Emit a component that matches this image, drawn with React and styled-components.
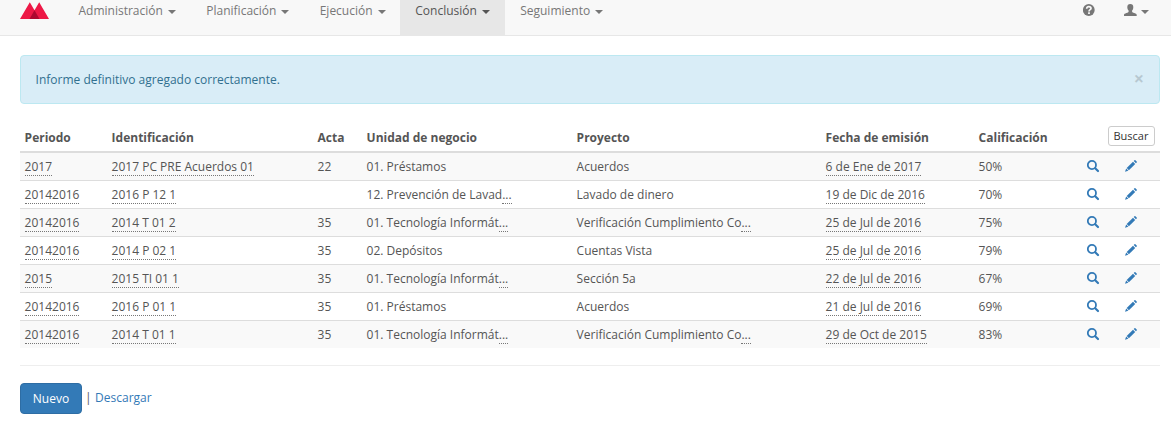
import React from "react";
import styled, { createGlobalStyle } from "styled-components";

const GlobalStyle = createGlobalStyle`
  *, *::before, *::after { box-sizing: border-box; }
  body {
    margin: 0;
    background: #fff;
    color: #555;
    font-family: "Open Sans", "Noto Sans", sans-serif;
    font-size: 12px;
    line-height: 17px;
  }
`;

const Navbar = styled.nav`
  display: flex;
  height: 36px;
  padding-left: 20px;
  background: #f8f8f8;
  border-bottom: 1px solid #e7e7e7;
`;

const Brand = styled.a`
  width: 43.5px;
  padding-top: 2px;
  svg { display: block; }
`;

const NavItem = styled.a`
  display: flex;
  width: ${(p) => p.$width}px;
  padding: 2px 0 0 15px;
  color: ${(p) => (p.$active ? "#555" : "#777")};
  background: ${(p) => (p.$active ? "#e7e7e7" : "transparent")};
`;

const Caret = styled.span`
  width: 8px;
  height: 4px;
  margin: 8px 0 0 5px;
  border-top: 4px solid currentColor;
  border-left: 4px solid transparent;
  border-right: 4px solid transparent;
`;

const NavTools = styled.div`
  display: flex;
  margin-left: auto;
  padding: 4px 22px 0 0;
  color: #777;
  svg { display: block; }
`;

const UserMenu = styled.a`
  display: flex;
  margin-left: 29px;
  ${Caret} { margin-top: 6px; margin-left: 4px; }
`;

const Content = styled.main`
  padding: 19px 11px 0 20px;
`;

const Alert = styled.div`
  display: flex;
  align-items: flex-start;
  justify-content: space-between;
  height: 49px;
  padding: 15px 15px 15px 14.6px;
  color: #31708f;
  background: #d9edf7;
  border: 1px solid #bce8f1;
  border-radius: 4px;
`;

const Close = styled.button`
  padding: 0;
  border: 0;
  background: none;
  color: #000;
  opacity: 0.15;
  font: bold 18px/15px "Open Sans", sans-serif;
`;

const Row = styled.div`
  display: grid;
  grid-template-columns: 87px 206px 49px 210px 249px 153px 108px 38px 1fr;
  height: 28px;
  padding: 5px 0 0 4.6px;
  border-bottom: 1px solid #ddd;
  &:nth-child(even) { background: #f9f9f9; }
  &:last-child { height: 27px; border-bottom: 0; }
`;

const HeaderRow = styled(Row)`
  height: 32px;
  padding-top: 8px;
  border-bottom: 2px solid #ddd;
  font-weight: 700;
`;

const Table = styled.section`
  margin-top: 17px;
`;

const Cell = styled.div`
  white-space: nowrap;
`;

const Dotted = styled.span`
  display: inline-block;
  height: 18px;
  border-bottom: 1px dotted #777;
`;

const SearchButton = styled.button`
  grid-column: 8 / 10;
  justify-self: end;
  width: 47px;
  height: 20px;
  margin: -3px 5px 0 0;
  padding: 0 1px 1px 0;
  color: #333;
  background: #fff;
  border: 1px solid #ccc;
  border-radius: 3px;
  font: 11px/17px "Open Sans", sans-serif;
`;

const IconLink = styled.a`
  padding-top: 2px;
  color: #337ab7;
  svg { display: block; }
`;

const Actions = styled.footer`
  display: flex;
  margin-top: 17px;
  padding-top: 17px;
  border-top: 1px solid #eee;
`;

const PrimaryButton = styled.button`
  width: 62px;
  height: 31px;
  padding: 0;
  color: #fff;
  background: #337ab7;
  border: 1px solid #2e6da4;
  border-radius: 4px;
  font: 12px/17px "Open Sans", sans-serif;
`;

const Separator = styled.span`
  margin: 6px 3.5px 0 3px;
`;

const Link = styled.a`
  margin-top: 6px;
  color: #337ab7;
`;

const Logo = () => (
  <svg width="30" height="17" viewBox="0 0 30 17">
    <path d="M0 17 9.8 0.3 14.5 8.2 19.2 0.3 29 17Z" fill="#ed1846" />
    <path d="M9.5 17 14.5 8.2 19.5 17Z" fill="#ad0830" />
  </svg>
);

const HelpIcon = () => (
  <svg width="12" height="12" viewBox="0 0 12 12">
    <circle cx="5.8" cy="6" r="5.9" fill="currentColor" />
    <path d="M3.7 4.7C3.7 3.2 4.6 2.6 5.8 2.6s2.2.7 2.2 1.8C8 5.7 6 5.7 6 7.4" fill="none" stroke="#f8f8f8" strokeWidth="1.7" />
    <path d="M5.1 8.2h1.8v1.7H5.1z" fill="#f8f8f8" />
  </svg>
);

const UserIcon = () => (
  <svg width="13" height="12" viewBox="0 0 13 12">
    <path d="M6.3 0C8.3 0 9.3 1.2 9.3 3.2c0 1.6-.5 2.6-1.2 3.3v1.3c0 .5 1 .8 2.2 1.3 1.5.6 2.4 1 2.4 1.9v1H0v-1c0-.9.9-1.3 2.4-1.9C3.7 8.6 4.6 8.3 4.6 7.8V6.5C3.9 5.8 3.3 4.8 3.3 3.2 3.3 1.2 4.3 0 6.3 0Z" fill="currentColor" />
  </svg>
);

const SearchIcon = () => (
  <svg width="13" height="13" viewBox="0 0 13 13">
    <circle cx="4.9" cy="5" r="4.1" fill="none" stroke="currentColor" strokeWidth="1.8" />
    <path d="m8.2 8.3 2.8 2.7" stroke="currentColor" strokeWidth="2.2" strokeLinecap="round" />
  </svg>
);

const PencilIcon = () => (
  <svg width="13" height="13" viewBox="0 0 13 13" fill="currentColor">
    <path d="m8.7 1 .8-.8q.4-.4.9 0l1.3 1.3q.4.5 0 .9l-.8.8Z" />
    <path d="m8 1.7 2.2 2.2-6.3 6.3L1.7 8Z" />
    <path d="m1.2 8.6 2.1 2.1L0 11.8Z" />
  </svg>
);

const menu = [
  { label: "Administración", width: 127.8 },
  { label: "Planificación", width: 113.4 },
  { label: "Ejecución", width: 95.6 },
  { label: "Conclusión", width: 104.9, active: true },
  { label: "Seguimiento", width: 114 },
];

const headings = ["Periodo", "Identificación", "Acta", "Unidad de negocio", "Proyecto", "Fecha de emisión", "Calificación"];

const reports = [
  ["2017", "2017 PC PRE Acuerdos 01", "22", "01. Préstamos", "Acuerdos", "6 de Ene de 2017", "50%"],
  ["20142016", "2016 P 12 1", "", "12. Prevención de Lavad...", "Lavado de dinero", "19 de Dic de 2016", "70%"],
  ["20142016", "2014 T 01 2", "35", "01. Tecnología Informát...", "Verificación Cumplimiento Co...", "25 de Jul de 2016", "75%"],
  ["20142016", "2014 P 02 1", "35", "02. Depósitos", "Cuentas Vista", "25 de Jul de 2016", "79%"],
  ["2015", "2015 TI 01 1", "35", "01. Tecnología Informát...", "Sección 5a", "22 de Jul de 2016", "67%"],
  ["20142016", "2016 P 01 1", "35", "01. Préstamos", "Acuerdos", "21 de Jul de 2016", "69%"],
  ["20142016", "2014 T 01 1", "35", "01. Tecnología Informát...", "Verificación Cumplimiento Co...", "29 de Oct de 2015", "83%"],
];

const Truncated = ({ text }) =>
  text.endsWith("...") ? (
    <>
      {text.slice(0, -3)}
      <Dotted>...</Dotted>
    </>
  ) : (
    text
  );

export default function App() {
  return (
    <>
      <GlobalStyle />
      <Navbar>
        <Brand><Logo /></Brand>
        {menu.map((m) => (
          <NavItem key={m.label} $width={m.width} $active={m.active}>
            {m.label}
            <Caret />
          </NavItem>
        ))}
        <NavTools>
          <HelpIcon />
          <UserMenu><UserIcon /><Caret /></UserMenu>
        </NavTools>
      </Navbar>
      <Content>
        <Alert>
          <span>Informe definitivo agregado correctamente.</span>
          <Close>×</Close>
        </Alert>
        <Table>
          <HeaderRow>
            {headings.map((h) => <Cell key={h}>{h}</Cell>)}
            <SearchButton>Buscar</SearchButton>
          </HeaderRow>
          {reports.map(([period, id, acta, unit, project, date, score], i) => (
            <Row key={i}>
              <Cell><Dotted>{period}</Dotted></Cell>
              <Cell><Dotted>{id}</Dotted></Cell>
              <Cell>{acta}</Cell>
              <Cell><Truncated text={unit} /></Cell>
              <Cell><Truncated text={project} /></Cell>
              <Cell><Dotted>{date}</Dotted></Cell>
              <Cell>{score}</Cell>
              <IconLink><SearchIcon /></IconLink>
              <IconLink><PencilIcon /></IconLink>
            </Row>
          ))}
        </Table>
        <Actions>
          <PrimaryButton>Nuevo</PrimaryButton>
          <Separator>|</Separator>
          <Link>Descargar</Link>
        </Actions>
      </Content>
    </>
  );
}
